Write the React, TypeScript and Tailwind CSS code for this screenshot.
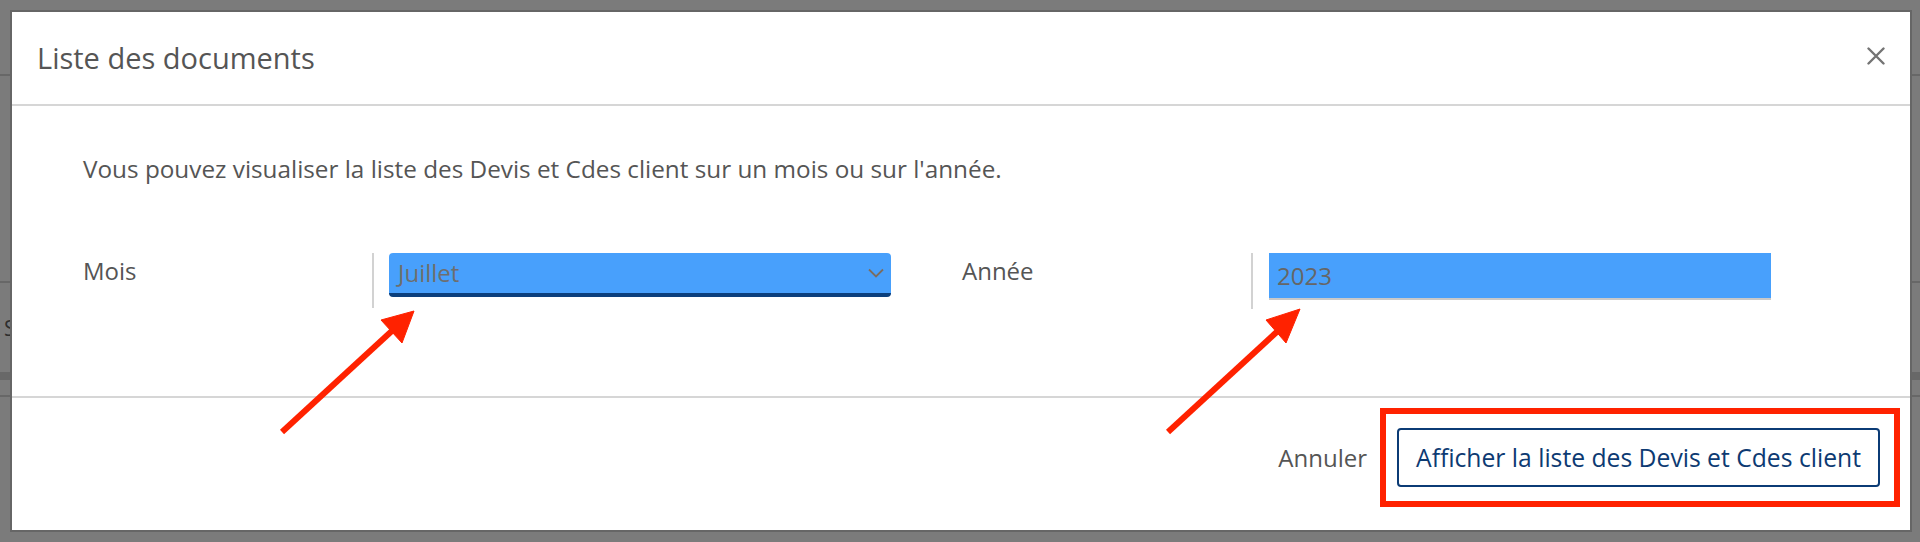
import React from "react";

const font = { fontFamily: '"Open Sans", "Noto Sans", sans-serif' };

function CloseIcon() {
  return (
    <svg width="18" height="18" viewBox="0 0 18 18" fill="none">
      <path d="M1.5 1.5 L16.5 16.5 M16.5 1.5 L1.5 16.5" stroke="#747474" strokeWidth="2.4" strokeLinecap="round" />
    </svg>
  );
}

function Chevron() {
  return (
    <svg width="16" height="10" viewBox="0 0 16 10" fill="none">
      <path d="M1 1.5 L8 8.5 L15 1.5" stroke="#7a6c60" strokeWidth="1.8" />
    </svg>
  );
}

function Arrows() {
  return (
    <svg className="absolute inset-0 pointer-events-none" width="1920" height="542" viewBox="0 0 1920 542">
      <g fill="#ff2200" stroke="#ff2200">
        <path d="M282 432 L394 329" strokeWidth="6" fill="none" strokeLinecap="butt" />
        <polygon points="381,320 414,311 402,343" strokeWidth="1" />
        <path d="M1168 432 L1280 329" strokeWidth="6" fill="none" strokeLinecap="butt" />
        <polygon points="1266,320 1300,309 1286,343" strokeWidth="1" />
      </g>
    </svg>
  );
}

export default function App() {
  return (
    <div className="relative w-[1920px] h-[542px] overflow-hidden bg-[#7b7b7b]" style={font}>
      {/* dimmed page behind the overlay */}
      <div className="flex flex-col">
        <div className="h-[74px]" />
        <div className="h-[2px] bg-[#676767]" />
        <div className="h-[205px]" />
        <div className="h-[2px] bg-[#676767]" />
        <div className="h-[89px] pl-[4px] pt-[33px] text-[21px] leading-[24px] text-[#2e2e2e]">S</div>
        <div className="h-[8px] bg-[#686868]" />
        <div className="h-[15px]" />
        <div className="h-[2px] bg-[#676767]" />
      </div>

      {/* modal */}
      <div className="absolute left-[10px] top-[10px] w-[1902px] h-[522px] border-2 border-[#666666] bg-white flex flex-col">
        <div className="h-[94px] shrink-0 border-b-2 border-[#d6d6d6] flex items-center justify-between pl-[25px] pr-[25px]">
          <div className="text-[29px] leading-[36px] text-[#555555]">Liste des documents</div>
          <div className="-mt-[4px]">
            <CloseIcon />
          </div>
        </div>

        <div className="h-[290px] shrink-0 pl-[71px] pt-[47px]">
          <div className="text-[24.3px] leading-[32px] text-[#555555]">
            Vous pouvez visualiser la liste des Devis et Cdes client sur un mois ou sur l'année.
          </div>
          <div className="mt-[68px] flex items-start">
            <div className="w-[289px] text-[24px] leading-[36px] text-[#555555]">Mois</div>
            <div className="w-[2px] h-[55px] bg-[#d2d2d2]" />
            <div className="ml-[15px] w-[502px] h-[44px] rounded-[4px] bg-[#48a0fc] border-b-4 border-[#0b3f7d] flex items-center justify-between pl-[9px] pr-[7px]">
              <span className="text-[24px] leading-[30px] text-[#6e6e6e]">Juillet</span>
              <Chevron />
            </div>
            <div className="w-[71px]" />
            <div className="w-[289px] text-[24px] leading-[36px] text-[#555555]">Année</div>
            <div className="w-[2px] h-[56px] bg-[#d2d2d2]" />
            <div className="ml-[16px] w-[502px] h-[47px] bg-[#48a0fc] border-b-2 border-[#c9c9c9] flex items-center pl-[8px]">
              <span className="text-[24px] leading-[30px] text-[#666666]">2023</span>
            </div>
          </div>
        </div>

        <div className="flex-1 border-t-2 border-[#d6d6d6] flex justify-end items-start pt-[30px] pr-[30px]">
          <div className="flex items-center h-[59px]">
            <span className="text-[24px] leading-[30px] text-[#555555] mr-[30px]">Annuler</span>
            <div className="relative">
              <div className="absolute left-[-17px] right-[-20px] top-[-20px] bottom-[-20px] border-[6px] border-[#ff2200]" />
              <button className="relative w-[483px] h-[59px] border-2 border-[#0b3b75] rounded-[4px] bg-white flex items-center justify-center text-[24.7px] leading-[30px] text-[#0d3a72]">
                Afficher la liste des Devis et Cdes client
              </button>
            </div>
          </div>
        </div>
      </div>

      <Arrows />
    </div>
  );
}
